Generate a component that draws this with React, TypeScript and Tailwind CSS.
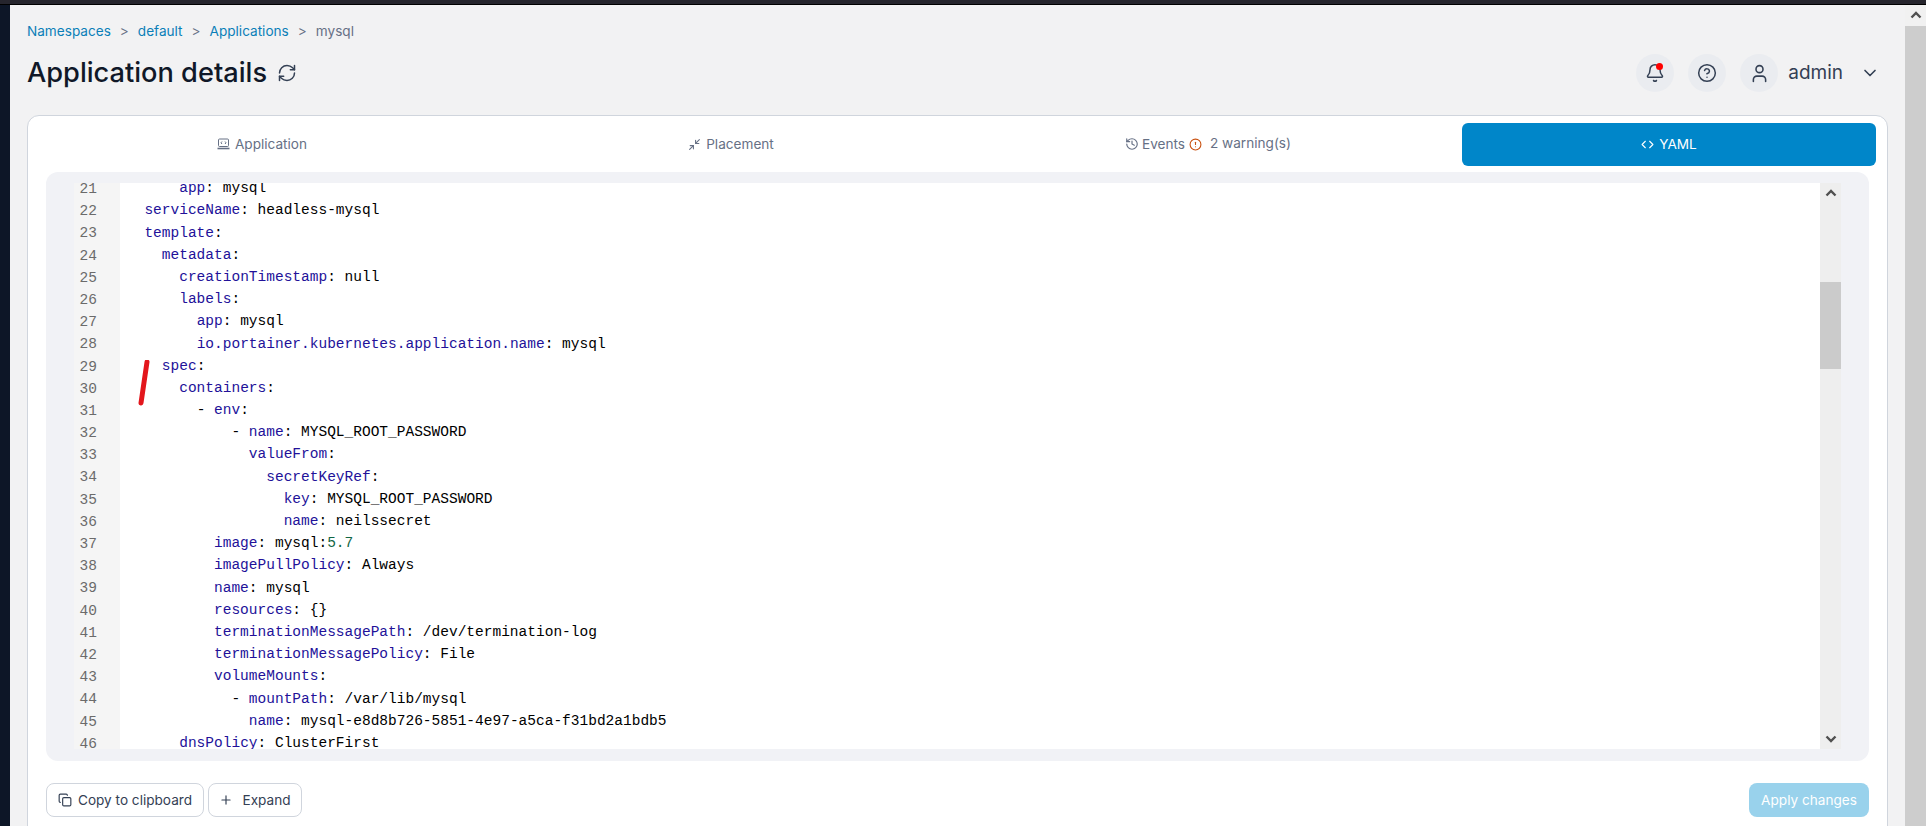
import React from 'react';
import { AlertCircle, Bell, ChevronDown, Code, Copy, HelpCircle, History, Minimize2, Plus, RefreshCw, User } from 'lucide-react';

interface YamlLine {
  no: number;
  indent: number;
  dash?: boolean;
  k: string;
  v?: string;
  num?: string;
}

const lines: YamlLine[] = [
  { no: 21, indent: 6, k: 'app', v: 'mysql' },
  { no: 22, indent: 2, k: 'serviceName', v: 'headless-mysql' },
  { no: 23, indent: 2, k: 'template' },
  { no: 24, indent: 4, k: 'metadata' },
  { no: 25, indent: 6, k: 'creationTimestamp', v: 'null' },
  { no: 26, indent: 6, k: 'labels' },
  { no: 27, indent: 8, k: 'app', v: 'mysql' },
  { no: 28, indent: 8, k: 'io.portainer.kubernetes.application.name', v: 'mysql' },
  { no: 29, indent: 4, k: 'spec' },
  { no: 30, indent: 6, k: 'containers' },
  { no: 31, indent: 8, dash: true, k: 'env' },
  { no: 32, indent: 12, dash: true, k: 'name', v: 'MYSQL_ROOT_PASSWORD' },
  { no: 33, indent: 14, k: 'valueFrom' },
  { no: 34, indent: 16, k: 'secretKeyRef' },
  { no: 35, indent: 18, k: 'key', v: 'MYSQL_ROOT_PASSWORD' },
  { no: 36, indent: 18, k: 'name', v: 'neilssecret' },
  { no: 37, indent: 10, k: 'image', v: 'mysql:', num: '5.7' },
  { no: 38, indent: 10, k: 'imagePullPolicy', v: 'Always' },
  { no: 39, indent: 10, k: 'name', v: 'mysql' },
  { no: 40, indent: 10, k: 'resources', v: '{}' },
  { no: 41, indent: 10, k: 'terminationMessagePath', v: '/dev/termination-log' },
  { no: 42, indent: 10, k: 'terminationMessagePolicy', v: 'File' },
  { no: 43, indent: 10, k: 'volumeMounts' },
  { no: 44, indent: 12, dash: true, k: 'mountPath', v: '/var/lib/mysql' },
  { no: 45, indent: 14, k: 'name', v: 'mysql-e8d8b726-5851-4e97-a5ca-f31bd2a1bdb5' },
  { no: 46, indent: 6, k: 'dnsPolicy', v: 'ClusterFirst' },
];

const ScrollArrow = ({ up, className }: { up?: boolean; className?: string }) => (
  <svg width="12" height="8" viewBox="0 0 12 8" className={className}>
    <polyline
      points={up ? '1.5,6.5 6,2 10.5,6.5' : '1.5,1.5 6,6 10.5,1.5'}
      fill="none"
      stroke="#505050"
      strokeWidth="2.4"
    />
  </svg>
);

const AppIcon = () => (
  <svg width="13" height="12" viewBox="0 0 13 12" fill="none" stroke="#667085" strokeWidth="1">
    <rect x="1.5" y="1" width="10" height="7.5" rx="1" />
    <path d="M5 3.5 4 4.8l1 1.2M8 3.5l1 1.3L8 6" />
    <path d="M.5 10.5h12" strokeWidth="1.6" />
  </svg>
);

export default function App() {
  return (
    <div className="flex h-[826px] flex-col overflow-hidden bg-[#f2f2f3] font-['Inter',sans-serif]">
      <div className="h-[5px] shrink-0 border-b border-black bg-[#26252d]" />
      <div className="flex min-h-0 flex-1">
        <div className="w-[10px] shrink-0 bg-[#0d1627]" />

        <main className="min-w-0 flex-1 overflow-hidden px-[17px]">
          <nav className="mt-[18px] flex h-[17px] items-center text-[13.6px] text-[#0b7fb8]">
            <span>Namespaces</span>
            <span className="mx-[9px] text-[#667085]">&gt;</span>
            <span>default</span>
            <span className="mx-[9px] text-[#667085]">&gt;</span>
            <span>Applications</span>
            <span className="mx-[9px] text-[#667085]">&gt;</span>
            <span className="text-[#667085]">mysql</span>
          </nav>

          <header className="mt-[14px] flex h-[38px] items-center justify-between">
            <div className="flex items-center">
              <h1 className="text-[27.2px] font-medium text-[#101828]">Application details</h1>
              <RefreshCw className="ml-[10px] h-[20px] w-[20px] text-[#344054]" strokeWidth={1.8} />
            </div>
            <div className="flex items-center text-[#344054]">
              <div className="relative flex h-[38px] w-[38px] items-center justify-center rounded-full bg-[#eaecf0]">
                <Bell className="h-[20px] w-[20px]" strokeWidth={1.8} />
                <span className="absolute top-[9px] right-[11px] h-[7px] w-[7px] rounded-full bg-[#ff0000]" />
              </div>
              <div className="ml-[14px] flex h-[38px] w-[38px] items-center justify-center rounded-full bg-[#eaecf0]">
                <HelpCircle className="h-[20px] w-[20px]" strokeWidth={1.8} />
              </div>
              <div className="ml-[14px] flex h-[38px] w-[38px] items-center justify-center rounded-full bg-[#eaecf0]">
                <User className="h-[21px] w-[21px]" strokeWidth={1.8} />
              </div>
              <span className="ml-[10px] text-[19px]">admin</span>
              <ChevronDown className="mr-[8px] ml-[17px] h-[20px] w-[20px]" strokeWidth={2} />
            </div>
          </header>

          <section className="mt-[23px] h-[760px] rounded-xl border border-[#d0d5dd] bg-white pt-[7px] pr-[11px] pl-[9px]">
            <div className="flex h-[43px] items-center text-[13.6px] text-[#667085]">
              <div className="flex w-[450px] items-center justify-center gap-[5px]">
                <AppIcon />
                <span>Application</span>
              </div>
              <div className="flex w-[488px] items-center justify-center gap-[5px]">
                <Minimize2 className="h-[13px] w-[13px]" />
                <span>Placement</span>
              </div>
              <div className="flex w-[466px] items-center justify-center">
                <History className="h-[14px] w-[14px]" />
                <span className="ml-[3px]">Events</span>
                <AlertCircle className="ml-[4px] h-[13px] w-[13px] text-[#c9500f]" />
                <span className="ml-[8px] -translate-y-px">2 warning(s)</span>
              </div>
              <div className="ml-[21px] flex h-[43px] flex-1 items-center justify-center gap-[5px] rounded-md bg-[#0086c9] text-white">
                <Code className="h-[13px] w-[13px]" />
                <span>YAML</span>
              </div>
            </div>

            <div className="mt-[6px] mr-[7px] ml-[9px] h-[589px] rounded-xl bg-[#f1f2f6] pt-[11px] pr-[28px] pb-[12px] pl-[28px]">
              <div className="flex h-[566px] overflow-hidden">
                <div className="min-w-0 flex-1 overflow-hidden bg-white font-['Liberation_Mono',monospace] text-[14.5px]">
                  <div className="relative -mt-[5px]">
                    {lines.map((line) => (
                      <div key={line.no} className="flex h-[22.2px] items-center whitespace-pre">
                        <span className="h-full w-[46px] shrink-0 bg-[#f5f5f5] pr-[23px] text-right leading-[22.2px] text-[#6b6b6b]">
                          {line.no}
                        </span>
                        <span className="pl-[7px] text-black">
                          {' '.repeat(line.indent)}
                          {line.dash && '- '}
                          <span className="text-[#221199]">{line.k}</span>
                          {':'}
                          {line.v && ` ${line.v}`}
                          {line.num && <span className="text-[#116644]">{line.num}</span>}
                        </span>
                      </div>
                    ))}
                    <svg width="12" height="46" viewBox="0 0 12 46" className="absolute top-[182px] left-[64px]">
                      <path d="M9 2 3 43" fill="none" stroke="#e3161c" strokeWidth="5" strokeLinecap="round" />
                    </svg>
                  </div>
                </div>
                <div className="flex w-[21px] shrink-0 flex-col bg-[#eeeeee]">
                  <div className="flex h-[99px] justify-center pt-[6px]">
                    <ScrollArrow up />
                  </div>
                  <div className="h-[87px] bg-[#cbcbcb]" />
                  <div className="flex flex-1 items-end justify-center pb-[6px]">
                    <ScrollArrow />
                  </div>
                </div>
              </div>
            </div>

            <div className="mt-[22px] mr-[7px] ml-[9px] flex items-start justify-between text-[13.6px]">
              <div className="flex gap-[4px] text-[#344054]">
                <button className="flex h-[34px] w-[158px] items-center justify-center gap-[6px] rounded-lg border border-[#d0d5dd] bg-white">
                  <Copy className="h-[14px] w-[14px]" />
                  Copy to clipboard
                </button>
                <button className="flex h-[34px] w-[94px] items-center justify-center gap-[9px] rounded-lg border border-[#d0d5dd] bg-white">
                  <Plus className="h-[14px] w-[14px]" />
                  Expand
                </button>
              </div>
              <button className="h-[34px] w-[120px] rounded-lg bg-[#99d2ec] text-white">Apply changes</button>
            </div>
          </section>
        </main>

        <div className="flex w-[21px] shrink-0 flex-col bg-[#cdcdcd]">
          <div className="flex h-[21px] justify-center bg-[#f1f1f1] pt-[6px]">
            <ScrollArrow up />
          </div>
        </div>
      </div>
    </div>
  );
}
